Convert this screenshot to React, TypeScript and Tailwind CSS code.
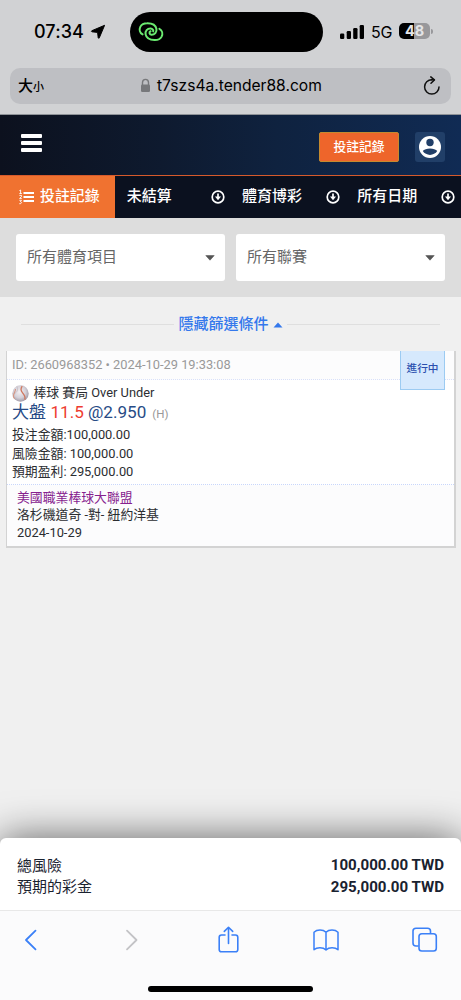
import type { ReactNode } from 'react';

const NAV_TABS = ['未結算', '體育博彩', '所有日期'];

const FILTERS = ['所有體育項目', '所有聯賽'];

const TOTALS = [
  { label: '總風險', value: '100,000.00 TWD' },
  { label: '預期的彩金', value: '295,000.00 TWD' },
];

/** iOS status bar: clock, dynamic island, signal and battery */
function StatusBar() {
  return (
    <div className="flex h-[68px] items-start font-['Inter','Noto_Sans_CJK_TC',sans-serif] text-black">
      <div className="flex w-[130px] shrink-0 items-center pl-[34px] pt-[20px]">
        <span className="w-[52px] whitespace-nowrap text-[18px] font-medium leading-[24px] tracking-[0.1px]">07:34</span>
        <svg className="ml-[4px] shrink-0" width="16" height="16" viewBox="0 0 16 16">
          <path d="M14.6 1.3 L9.3 13.8 Q8.7 14.9 8.2 13.7 L7.6 8.4 L2 7.8 Q.8 7.3 1.9 6.7 Z" fill="#000" stroke="#000" strokeWidth="1" strokeLinejoin="round" />
        </svg>
      </div>
      <div className="mt-[12px] flex h-[40px] w-[193px] shrink-0 items-center rounded-full bg-black pl-[8px]">
        <svg width="26" height="22" viewBox="0 0 26 22" fill="none" stroke="#6bea70" strokeWidth="2" strokeLinecap="round">
          <path d="M4.6 13.4 C1.6 11.8 1.1 8.3 2.4 5.6 C3.8 3 6.3 2.2 9 2.2 C13.5 2.1 17.6 3.8 18.4 7.8 C19.1 11.3 16.6 13.8 13.4 13.7 C11.3 13.5 10.8 11.2 12.6 10.2" />
          <path d="M21.4 7.8 C24.4 9.4 24.9 12.9 23.6 15.6 C22.2 18.2 19.7 19 17 19 C12.5 19.1 8.4 17.4 7.6 13.4 C6.9 9.9 9.4 7.4 12.6 7.5 C14.7 7.7 15.6 9.2 15.2 10.4" />
        </svg>
      </div>
      <div className="flex items-center pl-[17px] pt-[20px]">
        <svg width="25" height="16" viewBox="0 0 25 16">
          <rect x="0" y="9.5" width="4.3" height="5.5" rx="1.2" />
          <rect x="6.7" y="7" width="4.3" height="8" rx="1.2" />
          <rect x="13.2" y="4" width="4.3" height="11" rx="1.2" />
          <rect x="19.7" y="1" width="4.3" height="14" rx="1.2" />
        </svg>
        <span className="ml-[6px] w-[23px] text-[16px] leading-[24px] tracking-[-0.3px]">5G</span>
        <div className="ml-[5px] -mt-[2px] flex h-[16px] w-[31px] items-center justify-center rounded-[5px] bg-[linear-gradient(90deg,#000_48%,#98989b_48%)] text-[14.5px] font-bold leading-[16px] text-[#e4e4e6]">
          48
        </div>
        <div className="-mt-[2px] ml-[1px] h-[5px] w-[2px] rounded-r-full bg-[#98989b]" />
      </div>
    </div>
  );
}

function AddressBar() {
  return (
    <div className="mx-[10px] flex h-[36px] items-center rounded-[10px] bg-[#bebfc3] font-['Inter','Noto_Sans_CJK_TC',sans-serif] text-black">
      <div className="flex w-[130px] items-baseline pl-[8px] font-medium leading-[24px]">
        <span className="text-[15px]">大</span>
        <span className="text-[11px]">小</span>
      </div>
      <svg className="-mt-[2px] shrink-0" width="11" height="15" viewBox="0 0 11 15">
        <path d="M2.5 7 V4.6 a3 3.2 0 0 1 6 0 V7" fill="none" stroke="#77787b" strokeWidth="1.4" />
        <rect x="1" y="6.4" width="9" height="7.6" rx="1.3" fill="#77787b" />
      </svg>
      <span className="ml-[6px] flex-1 whitespace-nowrap text-[15.6px] leading-[24px]">t7szs4a.tender88.com</span>
      <svg className="mr-[9px] shrink-0" width="20" height="20" viewBox="0 0 20 20" fill="none" stroke="#111" strokeWidth="1.5" strokeLinecap="round" strokeLinejoin="round">
        <path d="M9.8 3.7 A7.2 7.2 0 1 0 17 10.9" />
        <path d="M8.8 .9 L12.4 3.9 L9 7.2" />
        <path d="M9.4 3.7 H12" />
      </svg>
    </div>
  );
}

function SiteHeader() {
  return (
    <header className="mt-[10px] flex h-[61px] items-center border-t border-[#8e9297] bg-[linear-gradient(90deg,#0c111e_0%,#0e1a2f_35%,#0f223f_60%,#102b54_100%)]">
      <div className="ml-[21px] flex w-[21px] -translate-y-[2px] flex-col gap-[3px]">
        <span className="h-[4px] rounded-[1px] bg-white" />
        <span className="h-[4px] rounded-[1px] bg-white" />
        <span className="h-[4px] rounded-[1px] bg-white" />
      </div>
      <div className="ml-auto mt-[3px] flex h-[30px] w-[80px] items-center justify-center rounded-[2px] border border-[#c48a2f] bg-[#ee652b] text-[12.8px] font-medium text-white">
        投註記錄
      </div>
      <div className="ml-[16px] mr-[16px] mt-[3px] flex h-[30px] w-[30px] items-center justify-center rounded-[3px] bg-[#213f68]">
        <svg width="22" height="22" viewBox="0 0 22 22">
          <circle cx="11" cy="11" r="11" fill="#fff" />
          <circle cx="11" cy="6.5" r="3.7" fill="#213f68" />
          <path d="M3.8 15 C6 11.6 16 11.6 18.2 15 A8.6 8.6 0 0 1 3.8 15 Z" fill="#213f68" />
        </svg>
      </div>
    </header>
  );
}

function ArrowDownCircle() {
  return (
    <svg width="14" height="14" viewBox="0 0 14 14" fill="none" stroke="#fff" strokeWidth="1.7">
      <circle cx="7" cy="7" r="5.8" />
      <path d="M7 3.4 V8" />
      <path d="M4 6.6 H10 L7 10.2 Z" fill="#fff" stroke="none" />
    </svg>
  );
}

function NavTabs() {
  return (
    <nav className="grid h-[43px] grid-cols-4 border-t border-[#d65a2c] bg-[#0b111f] text-[15px] font-medium text-white">
      <div className="flex items-center bg-[#f07230] pl-[19px]">
        <svg width="15" height="16" viewBox="0 0 15 16">
          <path d="M4.5 4 H15 M4.5 8 H15 M4.5 12 H15" stroke="#fff" strokeWidth="2" />
          <g fill="none" stroke="#fff" strokeWidth=".9">
            <path d="M.4 1.6 L1.6 1 V4.5 M.4 4.5 H2.8" />
            <path d="M.4 6.4 H2.5 V7.6 L.6 9.4 H2.8" />
            <path d="M.4 11.3 H2.5 L1.4 12.7 C3.2 12.7 2.8 15 .3 14.7" />
          </g>
        </svg>
        <span className="-mt-[2px] ml-[6px] whitespace-nowrap text-[14.9px]">投註記錄</span>
      </div>
      {NAV_TABS.map((tab) => (
        <div key={tab} className="flex items-center justify-between pl-[11.5px] pr-[6px]">
          <span className="-mt-[2px] whitespace-nowrap">{tab}</span>
          <ArrowDownCircle />
        </div>
      ))}
    </nav>
  );
}

function FilterBar() {
  return (
    <div className="flex h-[79px] gap-[11px] bg-[#ddd] px-[16px] pt-[16px]">
      {FILTERS.map((name) => (
        <div key={name} className="flex h-[47px] flex-1 items-center justify-between rounded-[3px] bg-white pl-[11px] pr-[10px] text-[15px] text-[#666]">
          <span>{name}</span>
          <svg width="10" height="6" viewBox="0 0 10 6">
            <path d="M.8 .6 H9.2 L5 5.2 Z" fill="#555" stroke="#555" strokeWidth=".6" strokeLinejoin="round" />
          </svg>
        </div>
      ))}
    </div>
  );
}

function FilterToggle() {
  return (
    <div className="flex h-[54px] items-center px-[21px] text-[15px] font-medium text-[#3478ec]">
      <span className="h-px w-[153px] bg-[#dfdfdf]" />
      <span className="ml-[4.5px] whitespace-nowrap">隱藏篩選條件</span>
      <svg className="ml-[4.5px] mt-[1px]" width="10" height="6" viewBox="0 0 10 6">
        <path d="M.5 5.4 L5 .4 L9.5 5.4 Z" fill="#3478ec" />
      </svg>
      <span className="ml-[4px] h-px flex-1 bg-[#dfdfdf]" />
    </div>
  );
}

function Baseball() {
  return (
    <svg className="shrink-0" width="17" height="17" viewBox="0 0 17 17">
      <defs>
        <radialGradient id="ball" cx="45%" cy="40%" r="60%">
          <stop offset="0" stopColor="#f3f0f3" />
          <stop offset=".6" stopColor="#d5d1d9" />
          <stop offset="1" stopColor="#a29ca8" />
        </radialGradient>
      </defs>
      <circle cx="8.5" cy="8.5" r="8.2" fill="url(#ball)" />
      <path d="M4.8 1.4 C6.6 4.5 5.2 7.5 1.6 9" fill="none" stroke="#c9c0c6" strokeWidth="1" />
      <path d="M3.5 4 C3.6 7 .9 8.4 1.5 12 M1.5 12 L2.6 13.8" fill="none" stroke="#d59684" strokeWidth="1.1" />
      <path d="M10.2 1.2 C8.6 3.5 8.6 5.6 10.4 7.6 C12.4 9.8 13.6 11.6 12.8 14.6" fill="none" stroke="#cf765d" strokeWidth="1.3" />
    </svg>
  );
}

function BetRow({ children }: { children: ReactNode }) {
  return <div className="h-[18px] whitespace-nowrap leading-[19px]">{children}</div>;
}

function BetCard() {
  return (
    <article className="relative ml-[6px] mr-[5px] h-[197px] border-b-2 border-l border-r-2 border-[#d3d3d3] bg-[#fcfcfd] text-[12.85px] text-[#2b2d31]">
      <div className="h-[29px] border-b border-dotted border-[#d8e0fa] pl-[5px] text-[12.85px] leading-[28px] text-[#999]">
        ID: 2660968352 • 2024-10-29 19:33:08
      </div>
      {/* Status badge hangs over the card's first divider */}
      <div className="absolute right-[9px] top-0 h-[39px] w-[45px] border border-t-0 border-[#9ccbf2] bg-[#d6e9fd] text-center text-[10.7px] font-medium leading-[36px] text-[#2a4fae]">
        進行中
      </div>
      <div className="h-[105px] border-b border-dotted border-[#c8d6fb] bg-white pl-[5px] pt-[4px]">
        <div className="flex h-[18px] items-center whitespace-nowrap">
          <Baseball />
          <span className="ml-[4.5px]">棒球 賽局 Over Under</span>
        </div>
        <div className="h-[23px] whitespace-nowrap text-[17.1px] leading-[21px] text-[#274b86]">
          大盤 <span className="text-[#ee3b2f]">11.5</span> @2.950
          <span className="ml-[6px] text-[11.5px] text-[#999]">(H)</span>
        </div>
        <div className="h-[18.5px] leading-[19px]">投注金額:100,000.00</div>
        <BetRow>風險金額: 100,000.00</BetRow>
        <BetRow>預期盈利: 295,000.00</BetRow>
      </div>
      <div className="pl-[10px] pt-[4px]">
        <div className="h-[17px] leading-[18px] text-[#86218e]">美國職業棒球大聯盟</div>
        <div className="h-[17.5px] whitespace-nowrap leading-[18px]">洛杉磯道奇 -對- 紐約洋基</div>
        <div className="h-[17px] leading-[18px]">2024-10-29</div>
      </div>
    </article>
  );
}

function TotalsPanel() {
  return (
    <section className="h-[72px] rounded-t-[6px] bg-white px-[17px] pt-[17px] text-[15px] text-[#1a2230] shadow-[0_0_40px_rgba(0,0,0,0.6)]">
      {TOTALS.map((row) => (
        <div key={row.label} className="flex h-[21.5px] items-center justify-between whitespace-nowrap">
          <span>{row.label}</span>
          <span className="text-[15.1px] font-bold">{row.value}</span>
        </div>
      ))}
    </section>
  );
}

/** Safari bottom toolbar with the home indicator */
function BrowserToolbar() {
  return (
    <footer className="relative h-[90px] border-t border-[#e8e8e8] bg-[#fbfbfc]">
      <div className="flex h-[58px] items-center pl-[24px] pr-[22px] text-[#3b80f7] [&_svg]:shrink-0">
        <svg width="14" height="22" viewBox="0 0 14 22" fill="none" stroke="currentColor" strokeWidth="1.8" strokeLinecap="round" strokeLinejoin="round">
          <path d="M11.5 1.7 L2 11 L11.5 20.3" />
        </svg>
        <svg className="ml-[87px] text-[#c3c3c6]" width="14" height="22" viewBox="0 0 14 22" fill="none" stroke="currentColor" strokeWidth="1.8" strokeLinecap="round" strokeLinejoin="round">
          <path d="M2 1.7 L11.5 11 L2 20.3" />
        </svg>
        <svg className="ml-[78px]" width="24" height="28" viewBox="0 0 24 28" fill="none" stroke="currentColor" strokeWidth="1.6" strokeLinecap="round" strokeLinejoin="round">
          <path d="M8 9 H4.5 Q2.2 9 2.2 11.3 V23.5 Q2.2 25.8 4.5 25.8 H18.5 Q20.8 25.8 20.8 23.5 V11.3 Q20.8 9 18.5 9 H15" />
          <path d="M11.5 17.5 V1.5 M7.3 5.4 L11.5 1.3 L15.7 5.4" />
        </svg>
        <svg className="ml-[71px]" width="28" height="24" viewBox="0 0 28 24" fill="none" stroke="currentColor" strokeWidth="1.5" strokeLinejoin="round">
          <path d="M14 4.2 C11 1.2 5 1.2 2 4.2 V21.7 C5 19.2 11 19.2 14 22 C17 19.2 23 19.2 26 21.7 V4.2 C23 1.2 17 1.2 14 4.2 Z M14 4.2 V22" />
        </svg>
        <svg className="ml-auto" width="28" height="28" viewBox="0 0 28 28" fill="none" stroke="currentColor" strokeWidth="1.6">
          <path d="M7.5 20 H5 Q2 20 2 17 V5 Q2 2.2 5 2.2 H16.5 Q19.5 2.2 19.5 5 V7.5" />
          <rect x="8" y="7.7" width="17.3" height="17.3" rx="2.8" />
        </svg>
      </div>
      <div className="mx-auto mt-[17px] h-[6px] w-[165px] rounded-full bg-black" />
    </footer>
  );
}

export default function App() {
  return (
    <div className="flex h-[1000px] w-[461px] flex-col overflow-hidden bg-[#d1d2d4] font-['Roboto','Noto_Sans_CJK_TC',sans-serif]">
      <StatusBar />
      <AddressBar />
      <SiteHeader />
      <NavTabs />
      <main className="flex flex-1 flex-col bg-[#f0f0f0]">
        <FilterBar />
        <FilterToggle />
        <BetCard />
        <div className="mt-auto">
          <TotalsPanel />
        </div>
      </main>
      <BrowserToolbar />
    </div>
  );
}
